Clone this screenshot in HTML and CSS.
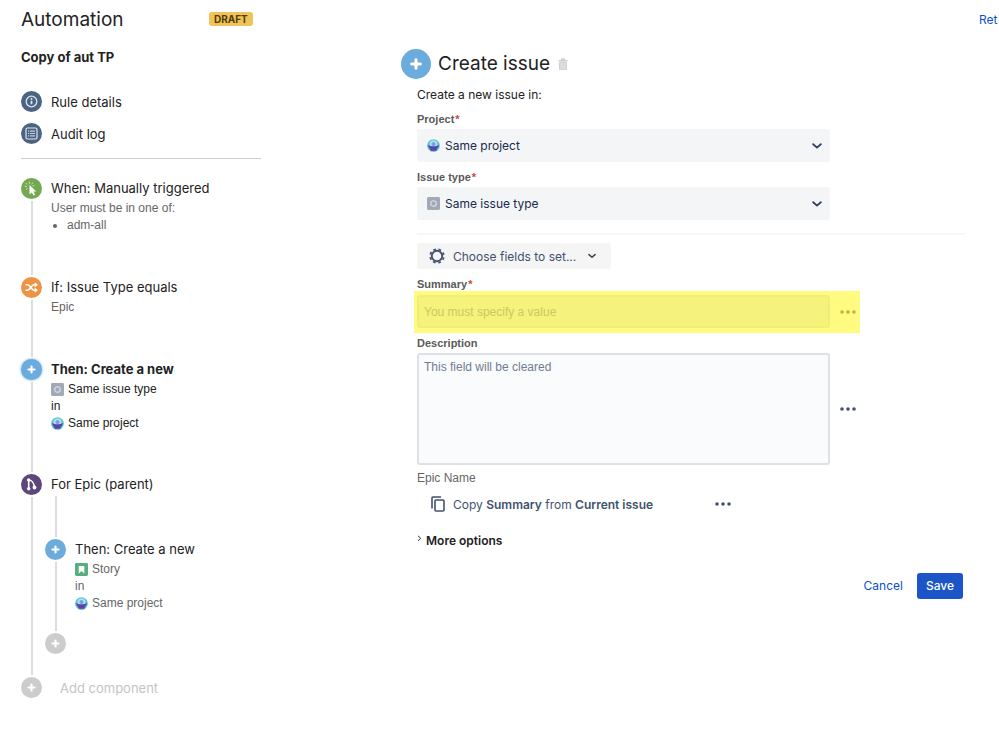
FILE: index.html
```
<!DOCTYPE html>
<html lang="en">
<head>
  <meta charset="UTF-8" /><meta name="viewport" content="width=device-width, initial-scale=1.0" />
  <title>Automation</title>
  <link rel="stylesheet" href="styles.css">
</head>
<body>
  <!-- shared icons -->
  <svg class="sprite" aria-hidden="true">
    <defs>
      <linearGradient id="sky" x1="0" y1="0" x2="0" y2="1">
        <stop offset="0" stop-color="#59cdc9" />
        <stop offset="1" stop-color="#45b5cf" />
      </linearGradient>
    </defs>
    <symbol id="i-plus" viewBox="0 0 21 21"><path d="M10.5 7.500v6M7.500 10.500h6" stroke="#fff" stroke-width="2.200" stroke-linecap="round" /></symbol>
    <symbol id="i-type" viewBox="0 0 14 14">
      <rect width="14" height="14" rx="1.5" fill="#a1a9b7" />
      <circle cx="7" cy="7" r="3" fill="none" stroke="#dfe2e8" stroke-width="1.2" />
    </symbol>
    <symbol id="i-project" viewBox="0 0 14 14">
      <circle cx="7" cy="7" r="6.8" fill="url(#sky)" />
      <circle cx="7" cy="6" r="4.3" fill="#b9dcf5" />
      <circle cx="7" cy="5.5" r="2.2" fill="#6fa5d8" />
      <path d="M1.5 6.2c1 1.400 3.200 1.700 5.500 1.700s4.500-.3 5.500-1.700c.2 2-.8 3.500-2 4.100v1.700c-2 1-5 1-7 0v-1.700c-1.200-.6-2.200-2.100-2-4.100z" fill="#5e40ae" />
    </symbol>
    <symbol id="i-dots" viewBox="0 0 16 4">
      <circle cx="2" cy="2" r="1.800" /><circle cx="8" cy="2" r="1.800" /><circle cx="14" cy="2" r="1.800" />
    </symbol>
    <symbol id="i-chevron" viewBox="0 0 10 6"><path d="M1.200 1.200L5 4.600l3.800-3.400" fill="none" stroke="currentColor" stroke-width="1.900" stroke-linecap="round" stroke-linejoin="round" /></symbol>
  </svg>

  <header class="topbar">
    <h1>Automation</h1>
    <span class="lozenge">DRAFT</span>
    <a class="return" href="#">Ret</a>
  </header>

  <div class="layout">
    <aside class="sidebar">
      <h2>Copy of aut TP</h2>
      <nav class="links">
        <a href="#">
          <svg class="dot slate" viewBox="0 0 21 21">
            <circle cx="10.5" cy="10.500" r="5.300" fill="none" stroke="#dfe5ee" stroke-width="1.300" />
            <path d="M10.500 9.800v3.500" stroke="#dfe5ee" stroke-width="1.700" /><circle cx="10.500" cy="7.900" r="1" fill="#dfe5ee" />
          </svg>
          Rule details
        </a>
        <a href="#">
          <svg class="dot slate" viewBox="0 0 21 21">
            <rect x="5" y="5" width="11" height="11" rx="1.500" fill="none" stroke="#dfe5ee" stroke-width="1.200" />
            <path d="M7 8.200h1.200M9 8.200h5M7 10.500h1.200M9 10.500h5M7 12.800h1.200M9 12.800h5" stroke="#c3cddb" stroke-width="1.200" />
          </svg>
          Audit log
        </a>
      </nav>

      <ol class="steps">
        <li class="step">
          <div class="rail">
            <svg class="dot green" viewBox="0 0 21 21">
              <path d="M8.500 7l6.700 6.400-2.700.2 1.600 3.200-1.600.8-1.600-3.200-2.400 1.900z" fill="#fff" />
              <path d="M8.400 5.800V3.600M6.200 6.500L4.800 4.900M10.600 6.300l1.200-1.700M5.800 8.500l-2-.3M6.500 10.400l-1.500 1.200M11.500 8l1.800-.5" stroke="#dcebd0" stroke-width=".9" />
            </svg>
          </div>
          <div class="body">
            <h3>When: Manually triggered</h3>
            <div class="sub">User must be in one of:<ul><li>adm-all</li></ul></div>
          </div>
        </li>
        <li class="step">
          <div class="rail">
            <svg class="dot orange" viewBox="0 0 21 21">
              <path d="M4.500 7.800h2.200c2.600 0 3.600 5.400 6.200 5.400h1.600M4.500 13.200h2.200c2.600 0 3.600-5.400 6.200-5.400h1.600" fill="none" stroke="#fff" stroke-width="1.600" />
              <path d="M13.700 5.200l3.200 2.600-3.200 2.600zM13.700 10.600l3.200 2.600-3.200 2.600z" fill="#fff" />
            </svg>
          </div>
          <div class="body">
            <h3>If: Issue Type equals</h3>
            <div class="sub">Epic</div>
          </div>
        </li>
        <li class="step selected">
          <div class="rail"><svg class="dot blue"><use href="#i-plus" /></svg></div>
          <div class="body">
            <h3>Then: Create a new</h3>
            <div class="sub">
              <div class="entity"><svg><use href="#i-type" /></svg>Same issue type</div>
              <div>in</div>
              <div class="entity"><svg><use href="#i-project" /></svg>Same project</div>
            </div>
          </div>
        </li>
        <li class="step branch">
          <div class="rail">
            <svg class="dot purple" viewBox="0 0 21 21">
              <path d="M7.700 6v9M8 6c2.500.2 5 2.800 5.300 7" fill="none" stroke="#fff" stroke-width="1.600" />
              <circle cx="7.700" cy="6" r="1.700" fill="#fff" /><circle cx="7.700" cy="14.800" r="1.700" fill="#fff" /><circle cx="13.500" cy="13.500" r="1.900" fill="#fff" />
            </svg>
          </div>
          <div class="body">
            <h3>For Epic (parent)</h3>
            <ol class="steps nested">
              <li class="step">
                <div class="rail"><svg class="dot blue"><use href="#i-plus" /></svg></div>
                <div class="body">
                  <h3>Then: Create a new</h3>
                  <div class="sub">
                    <div class="entity">
                      <svg viewBox="0 0 14 14"><rect width="14" height="14" rx="1.500" fill="#57ae7f" /><path d="M4 3.200h6v8L7 8.500l-3 2.700z" fill="#fff" /></svg>Story
                    </div>
                    <div>in</div>
                    <div class="entity"><svg><use href="#i-project" /></svg>Same project</div>
                  </div>
                </div>
              </li>
              <li class="step last">
                <button class="add" type="button" aria-label="Add to branch"><svg class="dot grey"><use href="#i-plus" /></svg></button>
              </li>
            </ol>
          </div>
        </li>
        <li class="step last">
          <button class="add" type="button"><svg class="dot grey"><use href="#i-plus" /></svg>Add component</button>
        </li>
      </ol>
    </aside>

    <main class="editor">
      <div class="title">
        <svg class="dot blue large"><use href="#i-plus" /></svg>
        <h2>Create issue</h2>
        <button class="trash" type="button" aria-label="Delete">
          <svg viewBox="0 0 10 12" width="10" height="12"><path d="M.5 2h9v1.500h-9zM3 .500h4V2H3z" fill="#ccc" /><path d="M1.500 4.500h7V11a.8.8 0 0 1-.8.8H2.300a.8.8 0 0 1-.8-.8z" fill="#dcdcdc" stroke="#c6c6c6" stroke-width=".8" /></svg>
        </button>
      </div>

      <form class="form">
        <p>Create a new issue in:</p>

        <label for="project">Project<b>*</b></label>
        <div class="select">
          <svg class="lead"><use href="#i-project" /></svg>
          <select id="project"><option>Same project</option></select>
          <svg class="chevron"><use href="#i-chevron" /></svg>
        </div>

        <label for="issueType">Issue type<b>*</b></label>
        <div class="select">
          <svg class="lead"><use href="#i-type" /></svg>
          <select id="issueType"><option>Same issue type</option></select>
          <svg class="chevron"><use href="#i-chevron" /></svg>
        </div>

        <hr>

        <button class="choose" type="button">
          <svg class="gear" viewBox="0 0 16 16">
            <circle cx="8" cy="8" r="5.200" fill="none" stroke="#42526e" stroke-width="1.900" />
            <circle cx="8" cy="8" r="6.800" fill="none" stroke="#42526e" stroke-width="1.800" stroke-dasharray="2.670 2.670" stroke-dashoffset="-1.340" />
          </svg>
          Choose fields to set...
          <svg class="chevron"><use href="#i-chevron" /></svg>
        </button>

        <label for="summary">Summary<b>*</b></label>
        <div class="row highlight">
          <input type="text" id="summary" placeholder="You must specify a value">
          <button class="more" type="button" aria-label="Summary options"><svg><use href="#i-dots" /></svg></button>
        </div>

        <label for="description">Description</label>
        <div class="row">
          <textarea id="description" placeholder="This field will be cleared"></textarea>
          <button class="more" type="button" aria-label="Description options"><svg><use href="#i-dots" /></svg></button>
        </div>

        <div class="epic">Epic Name</div>
        <div class="copy">
          <svg class="copy-icon" viewBox="0 0 14 16"><path d="M1 12.500V1.900A.9.900 0 0 1 1.900 1H10" fill="none" stroke="#42526e" stroke-width="1.600" /><rect x="4" y="4" width="9" height="11" rx="1" fill="none" stroke="#42526e" stroke-width="1.600" /></svg>
          <span>Copy <strong>Summary</strong> from <strong>Current issue</strong></span>
          <button class="more" type="button" aria-label="Epic name options"><svg><use href="#i-dots" /></svg></button>
        </div>

        <button class="options" type="button">
          <svg viewBox="0 0 5 7"><path d="M1 .8l2.700 2.500L1 5.800" fill="none" stroke="#333" stroke-width="1" /></svg>
          More options
        </button>

        <div class="actions">
          <button class="cancel" type="button">Cancel</button>
          <button class="save" type="submit">Save</button>
        </div>
      </form>
    </main>
  </div>
</body>
</html>
```
FILE: styles.css
```
* { box-sizing: border-box; }
body { margin: 0; font-family: Inter, sans-serif; font-size: 13px; color: #222; background: #fff; overflow-x: hidden; }
h1, h2, h3, p { margin: 0; font-weight: 400; }
ol, ul { list-style: none; margin: 0; padding: 0; }
a { color: #0b4fd0; text-decoration: none; }
button { font: inherit; color: inherit; background: none; border: none; padding: 0; cursor: pointer; }
svg { flex: none; }
.sprite { position: absolute; width: 0; height: 0; }

.topbar { display: flex; align-items: center; height: 38px; padding-left: 21px; }
.topbar h1 { width: 188px; font-size: 19px; }
.lozenge { padding: 0 5px; border-radius: 3px; background: #f0c356; color: #503c0c; font-size: 10px; font-weight: 700; line-height: 14px; }
.return { margin-left: auto; width: 20px; font-size: 12px; }

.layout { display: flex; justify-content: space-between; padding: 0 34px 0 21px; }
.sidebar { width: 240px; }
.sidebar h2 { margin-top: 9px; font-size: 13px; font-weight: 700; line-height: 20px; }
.links { display: grid; gap: 11px; margin-bottom: 19px; padding: 24px 0 14px; border-bottom: 1px solid #ccc; }
.links a { display: flex; align-items: center; gap: 9px; color: #222; }

.dot { display: block; width: 21px; height: 21px; border-radius: 50%; }
.dot.slate { background: #4c6483; }
.dot.green { background: #74a951; }
.dot.orange { background: #ec9444; }
.dot.blue { background: #6cacdc; }
.dot.purple { background: #5c467c; }
.dot.grey { background: #ccc; }
.dot.large { width: 30px; height: 30px; }

.step { display: flex; gap: 9px; }
.step .rail { display: flex; flex-direction: column; align-items: center; gap: 2px; padding-bottom: 2px; }
.step .rail::after { content: ""; flex: 1; width: 2px; background: #ddd; }
.step .body { padding-bottom: 43px; }
.step h3 { margin-bottom: 2px; font-size: 13px; line-height: 20px; white-space: nowrap; }
.step.selected h3 { font-weight: 700; }
.step.selected .body { padding-bottom: 42px; }
.step.selected .sub { color: #222; }
.step.selected .dot { box-shadow: 0 0 3px #6cacdc; }
.sub { color: #666; font-family: "Liberation Sans", sans-serif; font-size: 12px; line-height: 17px; }
.sub ul { list-style: disc; padding-left: 16px; }
.entity { display: flex; align-items: center; gap: 4px; }
.entity svg { width: 13px; height: 13px; }
.step.branch > .body { padding-bottom: 23px; }
.nested { margin-left: -6px; }
.nested::before { content: ""; display: block; width: 2px; height: 41px; margin: 0 0 2px 10px; background: #ddd; }
.step .nested .body { padding-bottom: 21px; }
.add { display: flex; align-items: center; gap: 18px; color: #c4c4c4; }

.editor { width: 564px; padding-top: 11px; }
.title { display: flex; align-items: center; gap: 7px; }
.title h2 { font-size: 19px; line-height: 30px; }
.trash { display: flex; margin-left: 1px; }
.form { padding-left: 16px; }
.form p { margin-top: 7px; font-size: 12px; line-height: 18px; }
.form label { display: block; margin-top: 7px; padding-bottom: 2px; color: #5a5a5a; font-family: "Liberation Sans", sans-serif; font-size: 11px; font-weight: 700; line-height: 16px; }
.form label b { margin-left: 1px; color: #d04437; }
.select { position: relative; margin-right: 135px; }
.select select { display: block; width: 100%; height: 33px; padding: 0 28px; appearance: none; border: none; border-radius: 3px; background: #f4f5f7; color: #172b4d; font: 12px Inter, sans-serif; }
.select svg { position: absolute; top: 0; bottom: 0; margin: auto; pointer-events: none; }
.select .lead { left: 10px; width: 13px; height: 13px; }
.chevron { width: 10px; height: 6px; color: #344563; }
.select .chevron { right: 8px; }
hr { margin: 13px 0 8px; border: none; border-top: 2px solid #f7f7f8; }
.choose { display: flex; align-items: center; gap: 8px; height: 26px; padding: 0 15px 0 12px; border-radius: 3px; background: #f5f5f5; color: #42526e; font-size: 12px; }
.choose .chevron { width: 8px; margin-left: 4px; }
.gear { width: 16px; height: 16px; }
.row { display: flex; margin-right: 105px; }
.row input, .row textarea { flex: 1; min-width: 0; border: 2px solid #dfe1e6; border-radius: 3px; background: #fafbfc; padding: 5px; font: 12px "Liberation Sans", sans-serif; resize: none; }
.row input { height: 33px; }
.row textarea { height: 112px; }
.row ::placeholder { color: #717d92; }
.more { display: grid; place-items: center; }
.row .more { width: 30px; padding-left: 6px; }
.more svg { width: 16px; height: 4px; fill: #42526e; }
.row.highlight { margin-left: -3px; margin-top: -3px; padding: 4px 0 5px 3px; background: #fffb80; }
.highlight input { border-color: #f1ee78; background: #f5f37c; }
.highlight ::placeholder { color: #cdc85c; }
.highlight .more svg { fill: #b9b53e; }
.form .highlight + label { margin-top: 2px; }
.epic { margin-top: 4px; color: #666; font-family: "Liberation Sans", sans-serif; font-size: 12px; line-height: 18px; }
.copy { display: flex; align-items: center; width: 314px; height: 26px; margin-top: 4px; padding-left: 14px; gap: 8px; color: #42526e; font-size: 12px; }
.copy strong { font-weight: 600; }
.copy-icon { width: 14px; height: 16px; }
.copy .more { margin-left: auto; width: 16px; }
.options { display: flex; gap: 4px; margin-top: 14px; font-size: 12px; font-weight: 600; line-height: 20px; }
.options svg { width: 5px; height: 7px; margin-top: 4px; }
.actions { display: flex; justify-content: flex-end; gap: 14px; margin-top: 22px; padding-right: 2px; font-size: 12px; line-height: 26px; }
.cancel { color: #0b4fd0; }
.save { padding: 0 9px; border-radius: 3px; background: #1b55c8; color: #fff; font-weight: 500; }
```
